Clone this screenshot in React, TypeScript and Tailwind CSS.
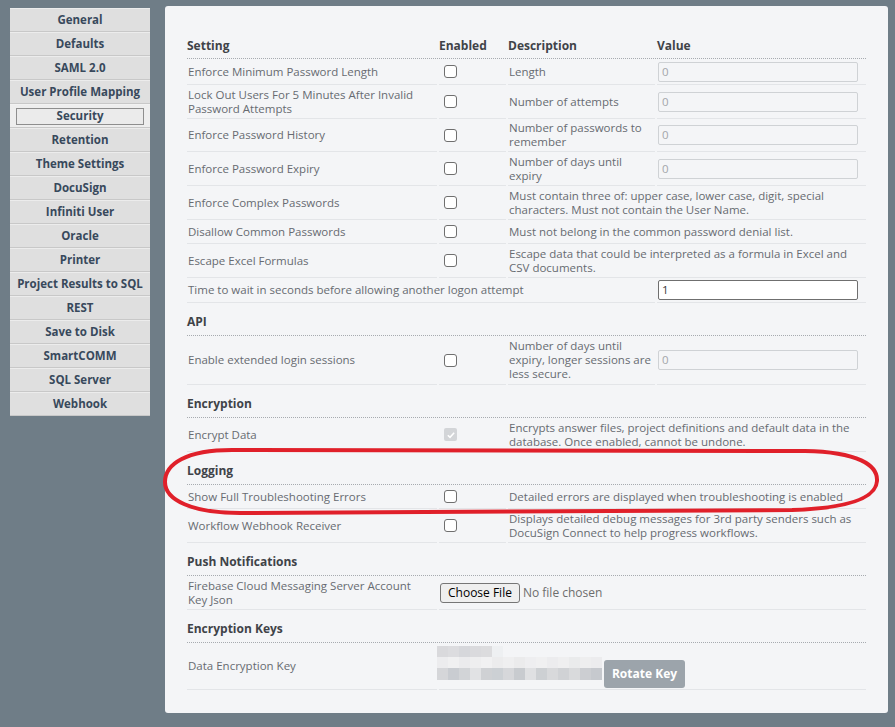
import React from 'react';
import clsx from 'clsx';

const navItems = [
  'General',
  'Defaults',
  'SAML 2.0',
  'User Profile Mapping',
  'Security',
  'Retention',
  'Theme Settings',
  'DocuSign',
  'Infiniti User',
  'Oracle',
  'Printer',
  'Project Results to SQL',
  'REST',
  'Save to Disk',
  'SmartCOMM',
  'SQL Server',
  'Webhook',
];

type Row =
  | { kind: 'section'; title: string }
  | {
      kind: 'row';
      label: string;
      h: string;
      check?: 'off' | 'locked';
      desc?: string;
      value?: 'disabled' | 'enabled' | 'file' | 'key';
      wideLabel?: boolean;
    };

const rows: Row[] = [
  { kind: 'row', label: 'Enforce Minimum Password Length', h: 'h-[26px]', check: 'off', desc: 'Length', value: 'disabled' },
  { kind: 'row', label: 'Lock Out Users For 5 Minutes After Invalid Password Attempts', h: 'h-[34px]', check: 'off', desc: 'Number of attempts', value: 'disabled' },
  { kind: 'row', label: 'Enforce Password History', h: 'h-[33px]', check: 'off', desc: 'Number of passwords to remember', value: 'disabled' },
  { kind: 'row', label: 'Enforce Password Expiry', h: 'h-[34px]', check: 'off', desc: 'Number of days until expiry', value: 'disabled' },
  { kind: 'row', label: 'Enforce Complex Passwords', h: 'h-[34px]', check: 'off', desc: 'Must contain three of: upper case, lower case, digit, special characters. Must not contain the User Name.' },
  { kind: 'row', label: 'Disallow Common Passwords', h: 'h-[24px]', check: 'off', desc: 'Must not belong in the common password denial list.' },
  { kind: 'row', label: 'Escape Excel Formulas', h: 'h-[34px]', check: 'off', desc: 'Escape data that could be interpreted as a formula in Excel and CSV documents.' },
  { kind: 'row', label: 'Time to wait in seconds before allowing another logon attempt', h: 'h-[25px]', value: 'enabled', wideLabel: true },
  { kind: 'section', title: 'API' },
  { kind: 'row', label: 'Enable extended login sessions', h: 'h-[49px]', check: 'off', desc: 'Number of days until expiry, longer sessions are less secure.', value: 'disabled' },
  { kind: 'section', title: 'Encryption' },
  { kind: 'row', label: 'Encrypt Data', h: 'h-[34px]', check: 'locked', desc: 'Encrypts answer files, project definitions and default data in the database. Once enabled, cannot be undone.' },
  { kind: 'section', title: 'Logging' },
  { kind: 'row', label: 'Show Full Troubleshooting Errors', h: 'h-[24px]', check: 'off', desc: 'Detailed errors are displayed when troubleshooting is enabled' },
  { kind: 'row', label: 'Workflow Webhook Receiver', h: 'h-[34px]', check: 'off', desc: 'Displays detailed debug messages for 3rd party senders such as DocuSign Connect to help progress workflows.' },
  { kind: 'section', title: 'Push Notifications' },
  { kind: 'row', label: 'Firebase Cloud Messaging Server Account Key Json', h: 'h-[34px]', value: 'file' },
  { kind: 'section', title: 'Encryption Keys' },
  { kind: 'row', label: 'Data Encryption Key', h: 'h-[47px]', value: 'key' },
];

// pixelated (blurred out) key value
const keyTop = ['bg-[#d9d9dc]', 'bg-[#dcdcdf]', 'bg-[#d6d7db]', 'bg-[#dadadd]', 'bg-[#dcdcde]', 'bg-[#eef0f2]'];
const keyMid = ['bg-[#ececee]', 'bg-[#f0f0f1]', 'bg-[#ebebed]', 'bg-[#eeeeef]', 'bg-[#f1f1f2]', 'bg-[#ececed]', 'bg-[#efeff0]', 'bg-[#ebebec]', 'bg-[#eeeef0]', 'bg-[#f0f0f1]', 'bg-[#ececee]', 'bg-[#efeff0]', 'bg-[#eaebec]', 'bg-[#eeeeef]', 'bg-[#ececee]'];
const keyBottom = ['bg-[#d5d6d9]', 'bg-[#c9ccd1]', 'bg-[#d2d4d7]', 'bg-[#e1e2e4]', 'bg-[#cfd1d4]', 'bg-[#ccd0d4]', 'bg-[#d6d7da]', 'bg-[#c8cbcf]', 'bg-[#dfe0e2]', 'bg-[#cdd0d3]', 'bg-[#d8d9db]', 'bg-[#d0d2d5]', 'bg-[#d9dadc]', 'bg-[#ccced2]', 'bg-[#c6c9ce]'];

const Checkbox = ({ locked }: { locked?: boolean }) =>
  locked ? (
    <span className="ml-[5px] flex h-[13px] w-[13px] items-center justify-center rounded-[2px] bg-[#d3d5d8]">
      <svg viewBox="0 0 12 12" className="h-[10px] w-[10px]">
        <path d="M2.2 6.3 L4.8 8.8 L9.8 3.2" fill="none" stroke="#ffffff" strokeWidth="1.8" />
      </svg>
    </span>
  ) : (
    <span className="ml-[5px] block h-[13px] w-[13px] rounded-[3px] border border-[#6f6f6f] bg-white" />
  );

const Value = ({ kind }: { kind: 'disabled' | 'enabled' }) =>
  kind === 'disabled' ? (
    <div className="ml-px flex h-[20px] w-[200px] items-center rounded-[2px] border border-[#cfd2d5] bg-[#f4f5f7] px-[3px] text-[#a3a6aa]">
      0
    </div>
  ) : (
    <div className="ml-px flex h-[20px] w-[200px] items-center rounded-[2px] border border-[#6f6f6f] bg-white px-[3px] text-[#3a3a3a]">
      1
    </div>
  );

export default function App() {
  return (
    <div className="relative min-h-screen bg-[#6f7d87] font-['Open_Sans',sans-serif]">
      <div className="flex items-start pl-[10px] pt-[6px]">
        {/* left navigation */}
        <nav className="mt-[2px] w-[140px] text-[11.5px] font-bold text-[#38495c]">
          {navItems.map((item) =>
            item === 'Security' ? (
              <div key={item} className="flex h-[24px] items-center justify-center border-b border-t border-[#c8c8c8] border-t-[#f2f2f2] bg-[#eeeeee] px-[6px]">
                <div className="flex h-[17px] w-full items-center justify-center border border-[#8e8e8e] bg-[#ebebeb] leading-none">
                  {item}
                </div>
              </div>
            ) : (
              <div key={item} className="flex h-[24px] items-center justify-center border-b border-t border-[#c8c8c8] border-t-[#ececec] bg-[#dfdfdf]">
                {item}
              </div>
            )
          )}
        </nav>

        {/* settings panel */}
        <main className="ml-[15px] h-[707px] w-[723px] rounded-[3px] bg-[#f4f5f7] pl-[22px] pt-[27px] text-[11.5px] leading-[14px] text-[#676b71]">
          <div className="w-[679px]">
            <div className="grid h-[26px] grid-cols-[250px_67px_147px_209px] items-center gap-x-[2px] border-b border-dotted border-[#a7abb0] text-[12px] font-bold text-[#3f4348]">
              <div>Setting</div>
              <div>Enabled</div>
              <div>Description</div>
              <div>Value</div>
            </div>

            {rows.map((row, i) => {
              if (row.kind === 'section')
                return (
                  <div key={i} className="flex h-[33px] items-end border-b border-dotted border-[#a7abb0] pb-[6px] text-[12px] font-bold text-[#3f4348]">
                    {row.title}
                  </div>
                );
              const cell = 'flex items-center border-b border-[#e3e5e8]';
              return (
                <div key={i} className={clsx('grid grid-cols-[250px_67px_147px_209px] gap-x-[2px]', row.h)}>
                  <div className={clsx(cell, 'pl-px pr-2', row.wideLabel && 'col-span-3')}>{row.label}</div>

                  {row.value === 'file' ? (
                    <div className={clsx(cell, 'col-span-3')}>
                      <span className="ml-px flex h-[20px] items-center rounded-[3px] border border-[#767676] bg-[#efefef] px-[7px] text-[12px] text-black">
                        Choose File
                      </span>
                      <span className="ml-[3px] text-[12px] text-[#6d6d6d]">No file chosen</span>
                    </div>
                  ) : row.value === 'key' ? (
                    <div className={clsx(cell, 'col-span-3 items-end')}>
                      <div className="-ml-[2px] mb-[9px] flex flex-col">
                        <div className="flex">
                          {keyTop.map((c, k) => (
                            <span key={k} className={clsx('h-[11px] w-[11px]', c)} />
                          ))}
                        </div>
                        <div className="flex">
                          {keyMid.map((c, k) => (
                            <span key={k} className={clsx('h-[11px] w-[11px]', c)} />
                          ))}
                        </div>
                        <div className="flex">
                          {keyBottom.map((c, k) => (
                            <span key={k} className={clsx('h-[12px] w-[11px]', c)} />
                          ))}
                        </div>
                      </div>
                      <button className="mb-[1px] ml-[2px] h-[28px] w-[81px] rounded-[3px] bg-[#9ca4ab] text-[12px] font-bold text-white">
                        Rotate Key
                      </button>
                    </div>
                  ) : row.wideLabel ? (
                    <div className={cell}>
                      <Value kind="enabled" />
                    </div>
                  ) : (
                    <>
                      <div className={cell}>{row.check && <Checkbox locked={row.check === 'locked'} />}</div>
                      <div className={clsx(cell, 'pl-px', !row.value && 'col-span-2')}>{row.desc}</div>
                      {row.value && (
                        <div className={cell}>
                          <Value kind={row.value} />
                        </div>
                      )}
                    </>
                  )}
                </div>
              );
            })}
          </div>
        </main>
      </div>

      {/* red annotation around the Logging section */}
      <svg className="pointer-events-none absolute left-0 top-0" width="895" height="727">
        <path
          d="M232 450 L805 451 C858 452 878 465 877 481 C876 497 852 508 792 510 L240 513 C192 513 165 500 165 482 C165 464 186 450 232 450 Z"
          fill="none"
          stroke="#e0202a"
          strokeWidth="4"
        />
      </svg>
    </div>
  );
}
